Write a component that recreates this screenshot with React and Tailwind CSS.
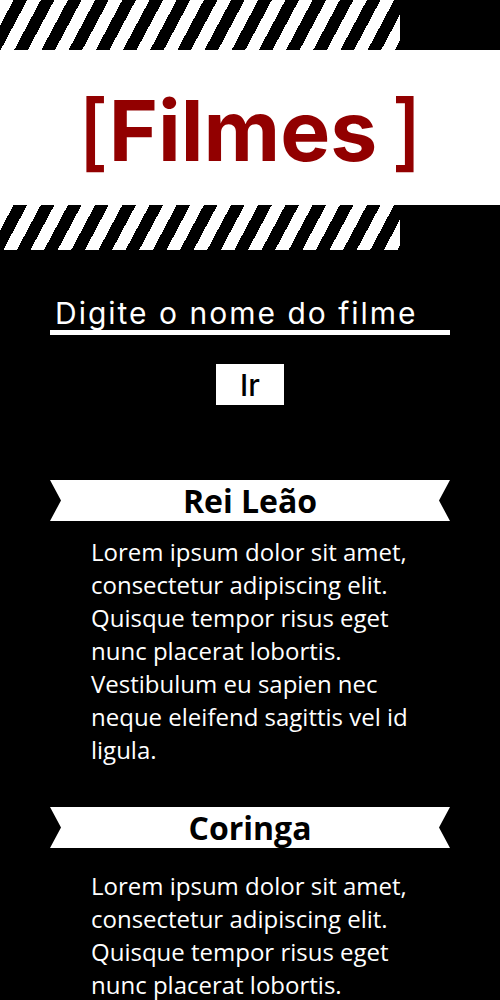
import React from "react";

// Diagonal black/white stripes used above and below the title band
const stripes = "w-[400px] bg-[image:repeating-linear-gradient(118deg,#fff_0_12px,#000_12px_24px)]";

const filmes = [
  {
    titulo: "Rei Leão",
    espaco: "mt-[14px]",
    linhas: [
      "Lorem ipsum dolor sit amet,",
      "consectetur adipiscing elit.",
      "Quisque tempor risus eget",
      "nunc placerat lobortis.",
      "Vestibulum eu sapien nec",
      "neque eleifend sagittis vel id",
      "ligula.",
    ],
  },
  {
    titulo: "Coringa",
    espaco: "mt-[21px]",
    linhas: [
      "Lorem ipsum dolor sit amet,",
      "consectetur adipiscing elit.",
      "Quisque tempor risus eget",
      "nunc placerat lobortis.",
      "Vestibulum eu sapien nec",
      "neque eleifend sagittis vel id",
      "ligula.",
    ],
  },
];

function Fita({ children }) {
  return (
    <div className="h-[41px] bg-white flex items-center justify-center [clip-path:polygon(0_0,100%_0,calc(100%-11px)_50%,100%_100%,0_100%,11px_50%)]">
      <h2 className="text-[32px] font-bold text-black leading-none font-['Open_Sans',sans-serif]">{children}</h2>
    </div>
  );
}

export default function App() {
  return (
    <div className="min-h-screen bg-black text-white font-['Open_Sans',sans-serif]">
      {/* --- Header --- */}
      <header>
        <div className="h-[50px] flex">
          <div className={stripes} />
        </div>
        <div className="h-[155px] bg-white flex items-center justify-center pt-[6px]">
          <h1 className="text-[#920000] font-['Inter',sans-serif] text-[84px] leading-none font-bold flex items-center">
            <span className="font-medium">[</span>
            <span>Filmes</span>
            <span className="font-medium ml-[14px]">]</span>
          </h1>
        </div>
        <div className="h-[45px] flex">
          <div className={stripes} />
        </div>
      </header>

      {/* --- Busca --- */}
      <section className="px-[50px] pt-[46px]">
        <div className="border-b-[5px] border-white pl-[5px] pb-[0px] text-[30px] leading-[34px] tracking-[2px] font-['Inter',sans-serif]">
          Digite o nome do filme
        </div>
        <div className="flex justify-center mt-[29px]">
          <button className="w-[68px] h-[41px] bg-white text-black text-[30px] leading-none font-medium font-['Inter',sans-serif]">
            Ir
          </button>
        </div>
      </section>

      {/* --- Lista de filmes --- */}
      <main className="px-[50px] pt-[75px] flex flex-col gap-[41px]">
        {filmes.map((f) => (
          <article key={f.titulo}>
            <Fita>{f.titulo}</Fita>
            <p className={`${f.espaco} pl-[41px] text-[24px] leading-[33px]`}>
              {f.linhas.map((l, i) => (
                <React.Fragment key={i}>
                  {l}
                  {i < f.linhas.length - 1 && <br />}
                </React.Fragment>
              ))}
            </p>
          </article>
        ))}
      </main>
    </div>
  );
}
